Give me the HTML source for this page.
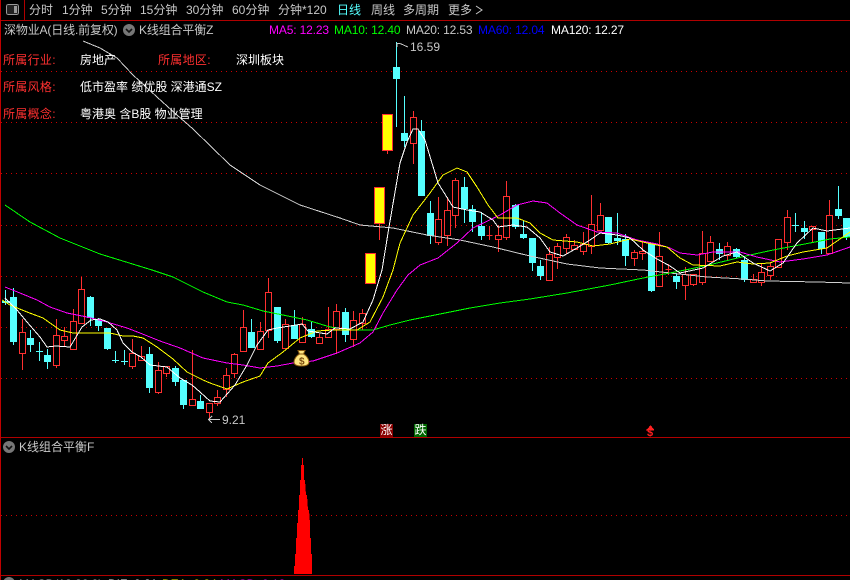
<!DOCTYPE html>
<html><head><meta charset="utf-8"><title>K线</title>
<style>
html,body{margin:0;padding:0;background:#000}
#p{position:relative;width:850px;height:580px;overflow:hidden;background:#000;font-family:"Liberation Sans","WenQuanYi Zen Hei","Noto Sans CJK SC",sans-serif}
#p svg{position:absolute;left:0;top:0}
.t{position:absolute;white-space:nowrap;font-size:12px;line-height:14px;color:#c8c8c8}
.b{color:#c8c8c8;top:3px}
.h{top:23px;letter-spacing:-.15px}
.m{line-height:15px;color:#ff3030;letter-spacing:.3px}
.w{line-height:15px;color:#fff}
</style></head><body><div id="p">
<svg width="850" height="580" viewBox="0 0 850 580" shape-rendering="crispEdges">
<!-- frame -->
<path d="M0 20.5H850M24.5 0V20M0 437.5H850M0 575.5H850" stroke="#b00000" fill="none"/>
<path d="M.5 0V580" stroke="#c00000" fill="none"/>
<!-- toolbar icon -->
<rect x="6.5" y="4.5" width="12" height="10" rx="2" fill="#222" stroke="#999"/>
<rect x="14" y="6" width="3" height="7" fill="#999"/>
<!-- grid -->
<g stroke="#cc0000" stroke-dasharray="1 4" fill="none">
<path d="M1 71.5H850M1 122.5H850M1 173.5H850M1 225.5H850M1 276.5H850M1 327.5H850M1 378.5H850M1 515.5H850"/>
</g>
<!-- cyan wicks -->
<path fill="none" stroke="#55ffff" d="M5.5 290V305M13.5 288V345M30.5 330V352M39.5 342V361M47.5 349V369M90.5 296V326M98.5 318V331M107.5 328V350M115.5 351V363M124.5 350V365M149.5 347V393M175.5 366V386M183.5 380V409M200.5 395V409M251.5 319V348M277.5 307V343M294.5 310V339M311.5 322V338M345.5 308V342M396.5 42V127M404.5 96V147M421.5 120V196M430.5 201V244M464.5 177V223M472.5 205V232M481.5 212V240M515.5 204V229M523.5 221V239M532.5 238V271M540.5 260V280M608.5 217V244M617.5 213V245M625.5 234V266M651.5 243V292M676.5 273V289M719.5 243V260M736.5 248V258M744.5 256V282M795.5 213V232M804.5 221V239M821.5 232V254M838.5 186V219M846.5 218V240"/>
<!-- cyan bodies -->
<path fill="#55ffff" d="M2 301h8v2h-8zM10 297h7v45h-7zM27 338h7v7h-7zM36 351h7v1h-7zM44 355h7v7h-7zM87 297h7v21h-7zM95 320h7v6h-7zM104 328h7v21h-7zM112 360h7v1h-7zM121 361h7v1h-7zM146 354h7v34h-7zM172 368h7v14h-7zM180 380h7v25h-7zM197 401h7v8h-7zM248 332h7v16h-7zM274 307h7v34h-7zM291 325h7v14h-7zM308 329h7v8h-7zM342 312h7v23h-7zM393 67h7v12h-7zM401 133h7v8h-7zM418 131h7v65h-7zM427 213h7v23h-7zM461 187h7v22h-7zM469 209h7v13h-7zM478 226h7v10h-7zM512 205h7v22h-7zM520 234h7v4h-7zM529 238h7v25h-7zM537 266h7v10h-7zM605 217h7v26h-7zM614 238h7v3h-7zM622 239h7v17h-7zM648 244h7v47h-7zM673 276h7v6h-7zM716 249h7v5h-7zM733 249h7v8h-7zM741 260h7v20h-7zM792 225h7v1h-7zM801 228h7v4h-7zM818 232h7v17h-7zM835 209h7v7h-7zM843 218h7v19h-7z"/>
<!-- red wicks -->
<path fill="none" stroke="#ff3030" d="M22.5 319V370M56.5 319V368M64.5 327V346M73.5 309V349M81.5 277V323M132.5 339V369M141.5 346V360M158.5 362V394M166.5 366V377M192.5 350V405M209.5 403V418M217.5 390V406M226.5 368V397M234.5 353V378M243.5 310V351M260.5 322V349M268.5 278V338M285.5 319V348M302.5 317V343M319.5 334V343M328.5 307V337M336.5 304V354M353.5 311V347M362.5 309V330M379.5 223V240M387.5 150V154M413.5 111V164M438.5 197V245M447.5 197V246M455.5 178V228M489.5 226V240M498.5 225V252M506.5 181V240M549.5 247V280M557.5 243V269M566.5 234V254M574.5 240V249M583.5 232V255M591.5 195V254M600.5 203V230M634.5 250V266M642.5 241V260M659.5 232V286M668.5 264V275M685.5 267V300M693.5 274V286M702.5 231V285M710.5 236V262M727.5 242V260M753.5 274V283M761.5 264V286M770.5 262V280M778.5 239V268M787.5 210V250M812.5 226V242M829.5 200V253"/>
<!-- red bodies -->
<path fill="#000" stroke="#ff3030" d="M19.5 332.5h6v21h-6zM53.5 335.5h6v30h-6zM61.5 336.5h6v4h-6zM70.5 321.5h6v28h-6zM78.5 289.5h6v34h-6zM129.5 353.5h6v13h-6zM138.5 356.5h6v4h-6zM155.5 370.5h6v22h-6zM163.5 366.5h6v7h-6zM189.5 399.5h6v6h-6zM206.5 403.5h6v9h-6zM214.5 397.5h6v6h-6zM223.5 375.5h6v14h-6zM231.5 354.5h6v19h-6zM240.5 327.5h6v24h-6zM257.5 331.5h6v18h-6zM265.5 292.5h6v38h-6zM282.5 324.5h6v24h-6zM299.5 324.5h6v18h-6zM316.5 337.5h6v6h-6zM325.5 329.5h6v8h-6zM333.5 311.5h6v18h-6zM350.5 320.5h6v19h-6zM359.5 313.5h6v10h-6zM410.5 117.5h6v26h-6zM435.5 219.5h6v23h-6zM444.5 210.5h6v25h-6zM452.5 180.5h6v35h-6zM486.5 235.5h6M495.5 235.5h6v4h-6zM503.5 196.5h6v41h-6zM546.5 254.5h6v26h-6zM554.5 246.5h6v11h-6zM563.5 237.5h6v11h-6zM571.5 245.5h6v4h-6zM580.5 244.5h6v7h-6zM588.5 224.5h6v22h-6zM597.5 215.5h6v15h-6zM631.5 252.5h6v6h-6zM639.5 251.5h6v2h-6zM656.5 256.5h6v30h-6zM665.5 269.5h6M682.5 274.5h6v11h-6zM690.5 274.5h6v10h-6zM699.5 253.5h6v29h-6zM707.5 242.5h6v19h-6zM724.5 246.5h6v9h-6zM750.5 279.5h6v3h-6zM758.5 272.5h6v10h-6zM767.5 266.5h6v9h-6zM775.5 239.5h6v28h-6zM784.5 217.5h6v25h-6zM809.5 226.5h6v3h-6zM826.5 215.5h6v38h-6z"/>
<!-- yellow candles -->
<path fill="#ffff00" stroke="#ff3030" d="M365.5 253.5h10v30h-10zM374.5 187.5h10v36h-10zM382.5 114.5h10v36h-10z"/>
<!-- MA120 -->
<polyline fill="none" stroke="#cfcfcf" points="83,41 100,48 117,58 133,75 157,97 177,115 193,129 230,165 260,185 300,205 340,218 360,225 393,228 427,235 460,240 493,247 530,256 567,264 600,268 643,270 670,273 707,277 743,279 767,281 817,282 850,283"/>
<!-- MA60 -->
<polyline fill="none" stroke="#00ff00" points="5,205 30,222 60,238 100,254 152,270 173,277 203,292 227,302 243,305 263,311 283,315 307,320 330,327 353,330 373,330 390,325 410,320 430,316 470,308 500,303 530,299 567,293 610,285 643,278 670,273 690,269 713,264 750,255 773,250 810,243 830,239 850,237"/>
<!-- MA20 -->
<polyline fill="none" stroke="#ff00ff" points="5,287 20,293 37,300 50,307 67,313 87,317 107,322 127,328 140,333 160,341 180,348 203,358 227,363 243,365 260,368 277,366 293,363 313,361 337,353 360,343 373,332 383,313 397,290 408,275 420,265 438,258 457,243 473,228 500,215 517,205 533,201 547,203 560,213 577,225 597,232 617,233 637,240 657,244 670,248 680,253 697,255 713,252 740,252 757,257 780,262 803,259 827,255 850,247"/>
<!-- MA10 -->
<polyline fill="none" stroke="#ffff00" points="2,300 10,305 27,312 43,318 60,330 73,333 93,333 110,333 123,336 133,336 143,338 157,347 173,359 187,372 203,380 210,383 227,389 243,382 260,376 268,363 283,352 300,338 317,331 333,330 357,330 370,322 383,297 393,270 400,243 413,215 430,193 443,175 457,168 467,172 477,187 488,205 498,218 517,218 530,223 540,233 553,240 577,242 593,246 610,244 630,239 647,243 667,247 680,258 693,265 720,266 737,262 753,264 770,263 787,256 803,252 827,248 850,232"/>
<!-- MA5 -->
<polyline fill="none" stroke="#ffffff" points="5,298 17,310 27,322 40,337 47,347 56,346 70,347 82,327 91,320 100,319 108,322 117,330 123,343 132,352 141,357 150,365 167,367 180,378 192,385 200,392 210,401 220,402 235,385 247,365 257,345 268,330 277,328 290,326 302,324 308,331 327,334 335,328 350,329 363,322 373,300 382,270 389,227 400,163 407,142 413,129 418,129 425,140 438,183 453,207 467,210 480,212 493,220 498,227 513,225 527,227 540,238 550,252 563,256 577,248 590,240 600,233 617,235 630,238 643,250 657,259 670,266 680,273 703,268 723,256 737,252 753,263 770,271 783,263 797,243 813,228 827,231 850,228"/>
<!-- high / low markers -->
<path fill="none" stroke="#c8c8c8" d="M397 43.5h3M397 43V47M400 43.5L408 47M208 419.5H220M208.5 419.5L212 416M208.5 419.5L212 423"/>
<!-- red spike -->
<polygon fill="#ff0000" points="302,458 303,458 303,465 304,465 304,480 305,480 306,495 307,495 308,510 309,510 310,523 310,538 311,538 311,554 312,554 312,574 294,574 294,566 295,566 295,554 296,554 296,538 297,538 297,523 298,523 298,510 299,510 299,495 300,495 300,480 301,480 301,465 302,465"/>
<!-- header arrows -->
<g shape-rendering="auto">
<circle cx="129" cy="30" r="6" fill="#777"/><path d="M126 29l3 3 3-3" fill="none" stroke="#111" stroke-width="1.6"/>
<circle cx="9" cy="447" r="6" fill="#777"/><path d="M6 446l3 3 3-3" fill="none" stroke="#111" stroke-width="1.6"/>
<circle cx="9" cy="583" r="6" fill="#777"/>
<path d="M476 6l6 4-6 4" fill="none" stroke="#c8c8c8"/>
<!-- money bag -->
<path d="M298 350.500h7l-1.500 3.500c3 1.500 5.500 5 5.500 8 0 3-3 4-7.500 4s-7.500-1-7.500-4c0-3 2.500-6.500 5.500-8z" fill="#ffe680" stroke="#8a5a10"/>
<path d="M298.500 354h5" stroke="#8a5a10"/>
<text x="299" y="364.500" font-size="10" font-weight="bold" fill="#7a4a10" font-family="Liberation Sans">$</text>
</g>
<!-- signal boxes -->
<rect x="380" y="424" width="13" height="13" fill="#880000"/>
<rect x="414" y="424" width="13" height="13" fill="#006600"/>
<path d="M650.5 426l-2.500 3h5zM646 430h8" stroke="#ff2020" fill="#ff2020"/>
</svg>

<span class="t b" style="left:29px">分时</span>
<span class="t b" style="left:62px">1分钟</span>
<span class="t b" style="left:101px">5分钟</span>
<span class="t b" style="left:140px">15分钟</span>
<span class="t b" style="left:186px">30分钟</span>
<span class="t b" style="left:232px">60分钟</span>
<span class="t b" style="left:278px">分钟*120</span>
<span class="t b" style="left:337px;color:#55ffff">日线</span>
<span class="t b" style="left:371px">周线</span>
<span class="t b" style="left:403px">多周期</span>
<span class="t b" style="left:448px">更多</span>

<span class="t h" style="left:4px">深物业A(日线.前复权)</span>
<span class="t h" style="left:139px">K线组合平衡Z</span>
<span class="t h" style="left:269px;color:#ff00ff">MA5: 12.23</span>
<span class="t h" style="left:334px;color:#00ff00">MA10: 12.40</span>
<span class="t h" style="left:406px">MA20: 12.53</span>
<span class="t h" style="left:478px;color:#0000ff">MA60: 12.04</span>
<span class="t h" style="left:551px;color:#fff">MA120: 12.27</span>

<span class="t m" style="left:3px;top:53px">所属行业:</span>
<span class="t w" style="left:80px;top:53px">房地产</span>
<span class="t m" style="left:158px;top:53px">所属地区:</span>
<span class="t w" style="left:236px;top:53px">深圳板块</span>
<span class="t m" style="left:3px;top:80px">所属风格:</span>
<span class="t w" style="left:80px;top:80px">低市盈率 绩优股 深港通SZ</span>
<span class="t m" style="left:3px;top:107px">所属概念:</span>
<span class="t w" style="left:80px;top:107px">粤港奥 含B股 物业管理</span>

<span class="t" style="left:410px;top:40px">16.59</span>
<span class="t" style="left:222px;top:413px">9.21</span>
<span class="t" style="left:380px;top:424px;color:#fff;font-size:12px;line-height:13px;width:13px;text-align:center">涨</span>
<span class="t" style="left:414px;top:424px;color:#fff;font-size:12px;line-height:13px;width:13px;text-align:center">跌</span>
<span class="t" style="left:647px;top:428px;color:#ff2020;font-size:11px;line-height:10px;font-weight:bold">$</span>

<span class="t" style="left:19px;top:440px">K线组合平衡F</span>

<span class="t" style="left:19px;top:577px">MACD(12,26,9)</span>
<span class="t" style="left:108px;top:577px;color:#fff">DIF: 0.21</span>
<span class="t" style="left:162px;top:577px;color:#ffff00">DEA: 0.24</span>
<span class="t" style="left:220px;top:577px;color:#ff00ff">MACD: 0.12</span>
</div></body></html>
